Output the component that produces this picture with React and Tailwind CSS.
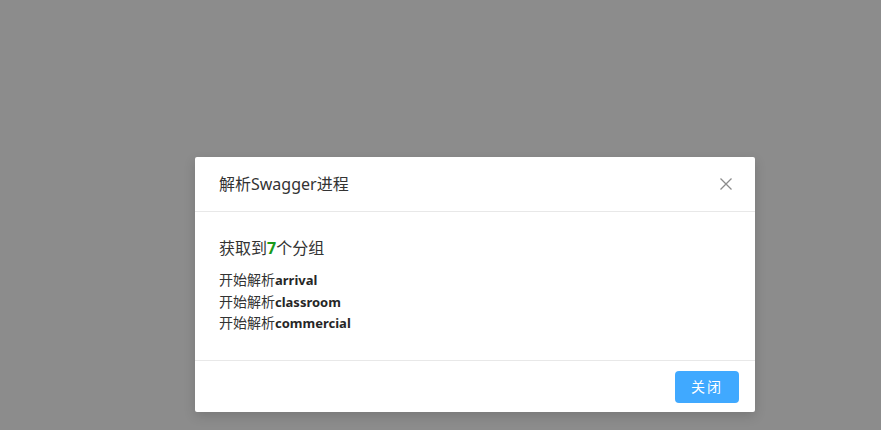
import React from "react";

const groups = ["arrival", "classroom", "commercial"];

const CloseIcon = () => (
  <svg width="14" height="14" viewBox="0 0 14 14" fill="none">
    <path d="M1.5 1.5L12.5 12.5M12.5 1.5L1.5 12.5" stroke="#8c8c8c" strokeWidth="1.3" />
  </svg>
);

const App = () => {
  return (
    <div
      className="w-[881px] h-[430px] bg-[#8c8c8c] relative overflow-hidden"
      style={{ fontFamily: '"Noto Sans", "Noto Sans CJK SC", sans-serif' }}
    >
      <div className="absolute left-[195px] top-[157px] w-[560px] bg-white rounded-[2px] shadow-[0_4px_12px_rgba(0,0,0,0.15)]">
        {/* header */}
        <div className="flex items-center justify-between h-[55px] px-6 border-b border-[#e8e8e8]">
          <div className="text-[16px] leading-[22px] text-[#333333]">解析Swagger进程</div>
          <button className="w-[14px] h-[14px] mr-[-2px] flex items-center justify-center">
            <CloseIcon />
          </button>
        </div>

        {/* body */}
        <div className="px-6 pt-6 pb-[26px] text-[#333333]">
          <div className="text-[16px] leading-6 mb-[9px]">
            获取到<span className="font-bold text-[#1a9b1a]">7</span>个分组
          </div>
          {groups.map((g) => (
            <div key={g} className="h-[21.5px] flex items-baseline text-[14px] leading-[21.5px]">
              <span>开始解析</span>
              <span className="text-[13px] font-bold text-[#262626]">{g}</span>
            </div>
          ))}
        </div>

        {/* footer */}
        <div className="flex justify-end px-4 pt-2.5 pb-[9px] border-t border-[#e8e8e8]">
          <button className="w-16 h-8 rounded bg-[#40a9ff] text-white text-[14px] tracking-[2px]">
            关闭
          </button>
        </div>
      </div>
    </div>
  );
};

export default App;
